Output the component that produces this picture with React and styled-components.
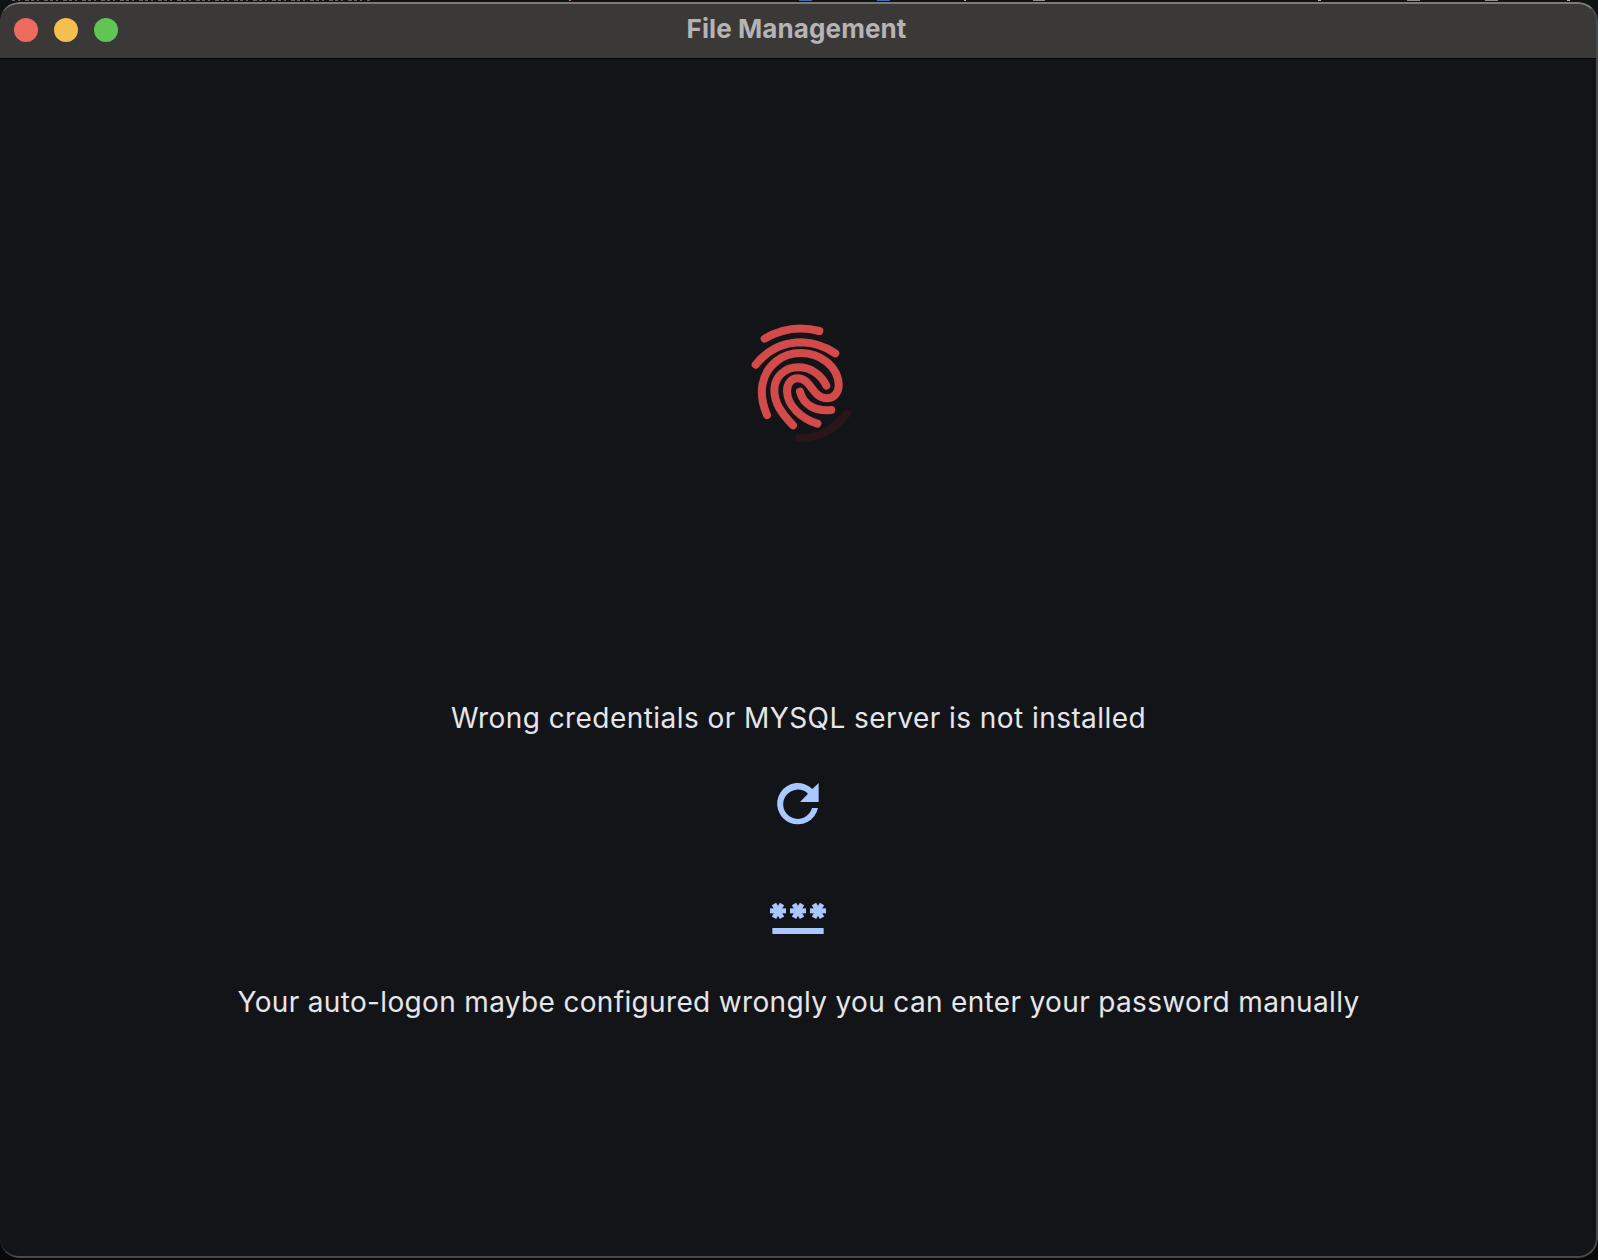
import React from 'react';
import styled, { createGlobalStyle } from 'styled-components';

const Global = createGlobalStyle`
  * { box-sizing: border-box; }
  html, body { margin: 0; padding: 0; background: #090708; overflow: hidden; }
`;

const Desktop = styled.div`
  width: 1598px;
  height: 1260px;
  padding: 2px 0 1px;
  background: linear-gradient(#101314 0 40px, #0a0708 60px);
  position: relative;
  font-family: Inter, "Liberation Sans", sans-serif;
`;

const Backdrop = styled.svg`
  position: absolute;
  top: 0;
  left: 0;
  display: block;
`;

const Window = styled.main`
  position: relative;
  width: 1598px;
  height: 1256px;
  border-radius: 20px;
  overflow: hidden;
  background: #131418;
  display: flex;
  flex-direction: column;

  &::after {
    content: "";
    position: absolute;
    inset: 0 0 0 -1px;
    border: 2px solid #48494b;
    border-left-width: 1px;
    border-top-color: #7d7a77;
    border-radius: 20px;
    pointer-events: none;
  }
`;

const TitleBar = styled.header`
  height: 57px;
  flex: none;
  display: grid;
  grid-template-columns: 1fr auto 1fr;
  align-items: center;
  padding: 0 17px 1px 14px;
  background: #3b3838;
  border-bottom: 1px solid #000;
`;

const Lights = styled.div`
  display: flex;
  gap: 16px;
`;

const Light = styled.span`
  width: 24px;
  height: 24px;
  border-radius: 50%;
  background: ${(p) => p.$color};
`;

const Title = styled.h1`
  margin: 0 0 2px;
  padding-right: 2px;
  font-size: 26px;
  line-height: 32px;
  font-weight: 700;
  letter-spacing: 0.1px;
  color: #b5b3b3;
  white-space: nowrap;
`;

const Content = styled.section`
  flex: 1;
  display: flex;
  flex-direction: column;
  align-items: center;
  padding-top: 251px;
`;

const Icon = styled.svg`
  display: block;
  flex: none;
  margin-top: ${(p) => p.$before || 0}px;
  margin-bottom: ${(p) => p.$after}px;
`;

const Message = styled.p`
  margin: 0;
  padding-right: 1px;
  font-size: 28px;
  line-height: 40px;
  font-weight: 400;
  letter-spacing: ${(p) => p.$tracking}px;
  color: #e6e6ea;
  white-space: nowrap;
`;

const Asterisk = ({ x }) => (
  <g transform={`translate(${x} 422.5)`} stroke="#a8c8ff" strokeWidth="15">
    {[0, 60, 120].map((a) => (
      <path key={a} d="M-24 0H24" transform={`rotate(${a})`} />
    ))}
  </g>
);

export default function App() {
  return (
    <Desktop>
      <Global />
      <Backdrop width="1598" height="2">
        <path d="M12 .5H370" stroke="#62666a" strokeDasharray="3 3 2 5 4 2" />
        <path d="M799 .5h13M877 .5h13" stroke="#426aa8" />
        <path d="M1033 .5h12M1407 .5h13M1485 .5h13" stroke="#8c8f91" />
        <path d="M569 .5h2" stroke="#c07a58" />
        <path d="M964 .5h2M1318 .5h3M1567 .5h3" stroke="#b0b2b3" />
      </Backdrop>
      <Window>
        <TitleBar>
          <Lights>
            <Light $color="#ed6a5f" />
            <Light $color="#f5bf4f" />
            <Light $color="#61c554" />
          </Lights>
          <Title>File Management</Title>
        </TitleBar>
        <Content>
          <Icon $after={248} width="130" height="140" viewBox="-3 -1 390 420" fill="none" strokeWidth="24" strokeLinecap="round">
            <path d="M194 384C252 384 302 354 335 310" stroke="#2a161a" />
            <g stroke="#d34a4a">
              <path d="M89 85C141 54 198 48 253 62" />
              <path d="M62 163C102 114 151 96 200 96C240 97 271 109 301 129" />
              <path d="M96 314C68 249 78 189 125 152C168 118 232 122 273 153C301 175 312 203 311 229C309 250 294 264 276 264C232 264 229 204 188 204C168 204 156 221 156 242C157 286 199 326 247 340" />
              <path d="M174 345C137 307 118 276 118 239C118 199 150 171 190 171C228 171 259 194 274 226" />
              <path d="M195 244C205 282 239 304 289 299" />
            </g>
          </Icon>
          <Message $tracking={0.44}>Wrong credentials or MYSQL server is not installed</Message>
          <Icon $before={32} $after={32} width="100" height="180" viewBox="-3 0 300 540" fill="#a8c8ff">
            <path d="M187 57A62 62 0 1 0 204 114H186A44 44 0 1 1 174 71L150 96H206V39Z" />
            <Asterisk x={84} />
            <Asterisk x={144} />
            <Asterisk x={204} />
            <path d="M67 474H221V492H67Z" />
          </Icon>
          <Message $tracking={0.34}>Your auto-logon maybe configured wrongly you can enter your password manually</Message>
        </Content>
      </Window>
    </Desktop>
  );
}
